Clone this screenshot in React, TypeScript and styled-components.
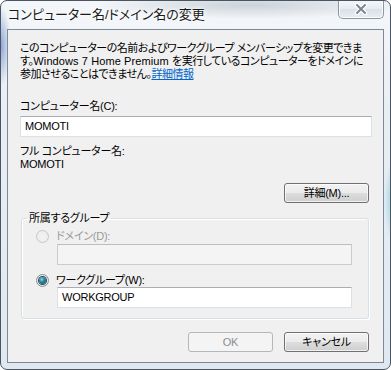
import styled, { createGlobalStyle } from "styled-components";

const GlobalStyle = createGlobalStyle`
  html, body {
    margin: 0;
    padding: 0;
    background: #ffffff;
  }
  body {
    font-family: "Liberation Sans", "Noto Sans CJK JP", sans-serif;
  }
`;

const Window = styled.div`
  width: 391px;
  height: 370px;
  box-sizing: border-box;
  border: 1px solid #4a5561;
  border-radius: 7px;
  display: flex;
  flex-direction: column;
  overflow: hidden;
  background:
    radial-gradient(ellipse 10px 40px at 0px 45px, #8fa7d6 0%, rgba(143, 167, 214, 0) 100%),
    radial-gradient(ellipse 8px 40px at 391px 200px, #9fd6e6 0%, rgba(159, 214, 230, 0) 100%),
    radial-gradient(ellipse 160px 14px at 250px 4px, rgba(170, 180, 190, 0.55) 0%, rgba(170, 180, 190, 0) 100%),
    linear-gradient(180deg, #f4f7fa 0%, #e9eef4 30%, #dfe8f0 100%);
`;

const TitleBar = styled.div`
  height: 28px;
  flex-shrink: 0;
  display: flex;
  align-items: flex-start;
  padding-left: 7px;
`;

const Title = styled.div`
  font-size: 13px;
  line-height: 16px;
  margin-top: 6px;
  color: #1a1a1a;
  font-feature-settings: "palt";
  text-shadow: 0 0 6px #ffffff, 0 0 3px #ffffff;
`;

const CloseButton = styled.div`
  margin-left: auto;
  margin-right: 6px;
  margin-top: -1px;
  width: 46px;
  height: 19px;
  box-sizing: border-box;
  border: 1px solid #8a96a4;
  border-top: none;
  border-radius: 0 0 5px 5px;
  background: linear-gradient(180deg, #f6f8fa 0%, #e6ebf0 50%, #d9e0e7 51%, #e9eef3 100%);
  box-shadow: inset 0 0 0 1px rgba(255, 255, 255, 0.8);
  display: flex;
  align-items: center;
  justify-content: center;
`;

const Client = styled.div`
  flex: 1;
  margin: 0 6px 6px 6px;
  border: 1px solid #7d8995;
  background: #f0f0f0;
  padding: 12px 11px 10px 12px;
  display: flex;
  flex-direction: column;
  font-size: 11px;
  line-height: 13px;
  letter-spacing: -0.25px;
  color: #000000;
  font-feature-settings: "palt";

  & > * {
    flex-shrink: 0;
  }
`;

const Description = styled.div`
  display: flex;
  flex-direction: column;
  letter-spacing: -0.5px;
`;

const DescLine = styled.span`
  white-space: nowrap;
`;

const Latin = styled.span`
  letter-spacing: 0.1px;
`;

const Link = styled.a`
  color: #0066cc;
  text-decoration: underline;
  cursor: pointer;
`;

const Label = styled.div<{ $top?: number }>`
  margin-top: ${(p) => p.$top ?? 0}px;
`;

const TextBox = styled.div<{ $top?: number; $left?: number; $disabled?: boolean }>`
  margin-top: ${(p) => p.$top ?? 0}px;
  margin-left: ${(p) => p.$left ?? 0}px;
  height: 21px;
  box-sizing: border-box;
  border: 1px solid ${(p) => (p.$disabled ? "#c8cdd2" : "#dbdfe6")};
  border-top-color: ${(p) => (p.$disabled ? "#b9bec3" : "#abadb3")};
  background: ${(p) => (p.$disabled ? "#f4f4f4" : "#ffffff")};
  padding: 0 4px;
  display: flex;
  align-items: center;
`;

const ButtonRow = styled.div<{ $top: number }>`
  margin-top: ${(p) => p.$top}px;
  margin-right: 3px;
  display: flex;
  justify-content: flex-end;
  gap: 11px;
`;

const Button = styled.div<{ $disabled?: boolean }>`
  width: 85px;
  height: 20px;
  box-sizing: border-box;
  border: 1px solid ${(p) => (p.$disabled ? "#b3b8bc" : "#707070")};
  border-radius: 3px;
  background: ${(p) =>
    p.$disabled
      ? "#f4f4f4"
      : "linear-gradient(180deg, #f2f2f2 0%, #ebebeb 50%, #dddddd 51%, #cfcfcf 100%)"};
  box-shadow: inset 0 0 0 1px ${(p) => (p.$disabled ? "#f4f4f4" : "rgba(255,255,255,0.7)")};
  color: ${(p) => (p.$disabled ? "#8d8d8d" : "#000000")};
  display: flex;
  align-items: center;
  justify-content: center;
`;

const Group = styled.fieldset`
  margin: 9px 3px 0 1px;
  padding: 1px 16px 10px 14px;
  border: 1px solid #d5dfe5;
  border-radius: 3px;
  box-shadow: inset 1px 1px 0 #ffffff, 1px 1px 0 #ffffff;
  min-width: 0;
`;

const Legend = styled.legend`
  padding: 0 2px;
  margin-left: -9px;
  line-height: 13px;
`;

const RadioRow = styled.div<{ $top: number; $disabled?: boolean }>`
  margin-top: ${(p) => p.$top}px;
  display: flex;
  align-items: center;
  gap: 7px;
  color: ${(p) => (p.$disabled ? "#9a9a9a" : "#000000")};
`;

const RadioDot = styled.div<{ $checked?: boolean; $disabled?: boolean }>`
  width: 13px;
  height: 13px;
  box-sizing: border-box;
  border-radius: 50%;
  border: 1px solid ${(p) => (p.$disabled ? "#c4c8cc" : "#8e8f8f")};
  background: ${(p) =>
    p.$disabled
      ? "radial-gradient(circle at 50% 50%, #f4f4f4 0%, #e9e9e9 100%)"
      : "radial-gradient(circle at 50% 40%, #ffffff 0%, #dcdcdc 100%)"};
  display: flex;
  align-items: center;
  justify-content: center;

  &::after {
    content: "";
    display: ${(p) => (p.$checked ? "block" : "none")};
    width: 7px;
    height: 7px;
    border-radius: 50%;
    background: radial-gradient(circle at 40% 35%, #8fd3e8 0%, #2a7c98 45%, #0f4d66 100%);
    box-shadow: 0 0 0 1px #1d4f63;
  }
`;

const CloseGlyph = () => (
  <svg width="16" height="12" viewBox="0 0 16 12">
    <path d="M4 2 L12 10 M12 2 L4 10" stroke="#ffffff" strokeWidth="4.5" strokeLinecap="round" />
    <path d="M4 2 L12 10 M12 2 L4 10" stroke="#7c8490" strokeWidth="2" strokeLinecap="round" />
  </svg>
);

const App = () => {
  return (
    <>
      <GlobalStyle />
      <Window>
        <TitleBar>
          <Title>コンピューター名/ドメイン名の変更</Title>
          <CloseButton>
            <CloseGlyph />
          </CloseButton>
        </TitleBar>
        <Client>
          <Description>
            <DescLine>このコンピューターの名前およびワークグループ メンバーシップを変更できま</DescLine>
            <DescLine>
              す。<Latin>Windows 7 Home Premium </Latin>を実行しているコンピューターをドメインに
            </DescLine>
            <DescLine>
              参加させることはできません。<Link>詳細情報</Link>
            </DescLine>
          </Description>

          <Label $top={19}>コンピューター名(C):</Label>
          <TextBox $top={3}>MOMOTI</TextBox>

          <Label $top={8}>フル コンピューター名:</Label>
          <Label>MOMOTI</Label>

          <ButtonRow $top={12}>
            <Button>詳細(M)...</Button>
          </ButtonRow>

          <Group>
            <Legend>所属するグループ</Legend>
            <RadioRow $top={4} $disabled>
              <RadioDot $disabled />
              ドメイン(D):
            </RadioRow>
            <TextBox $top={1} $left={21} $disabled />
            <RadioRow $top={9}>
              <RadioDot $checked />
              ワークグループ(W):
            </RadioRow>
            <TextBox $top={0} $left={21}>
              WORKGROUP
            </TextBox>
          </Group>

          <ButtonRow $top={13}>
            <Button $disabled>OK</Button>
            <Button>キャンセル</Button>
          </ButtonRow>
        </Client>
      </Window>
    </>
  );
};

export default App;
